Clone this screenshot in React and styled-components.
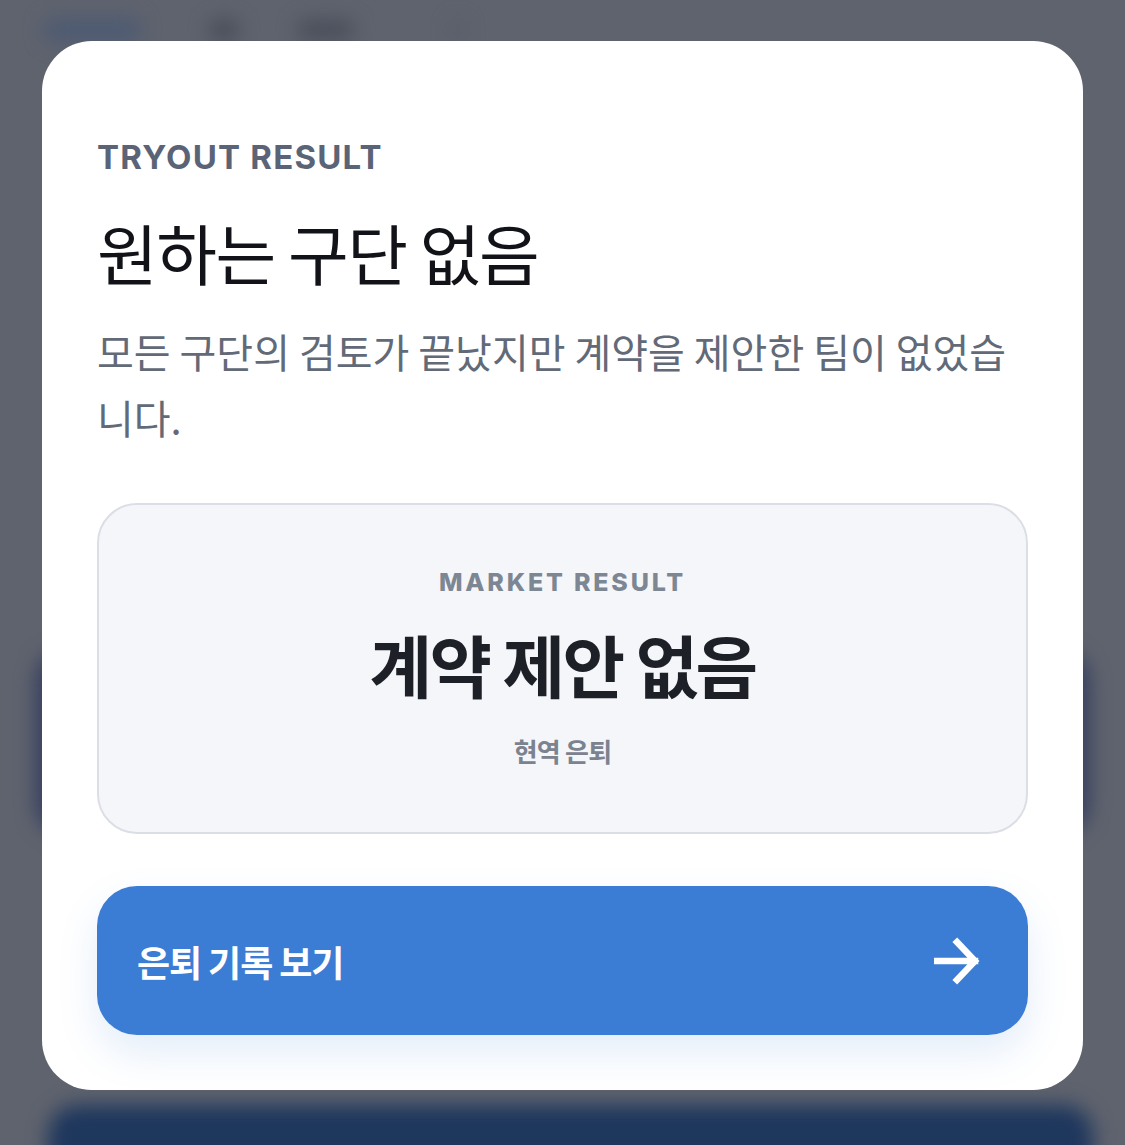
import React from "react";
import styled, { createGlobalStyle } from "styled-components";

const GlobalStyle = createGlobalStyle`
  html, body {
    margin: 0;
    padding: 0;
    background: #5f636e;
    font-family: Inter, "Noto Sans CJK KR", sans-serif;
  }
  * {
    box-sizing: border-box;
  }
`;

const Screen = styled.div`
  position: relative;
  width: 1125px;
  height: 1145px;
  overflow: hidden;
  background: #5f636e;
`;

/* blurred page behind the dialog */
const Backdrop = styled.div`
  display: flex;
  flex-direction: column;
  height: 100%;
  filter: blur(10px);
`;

const TopBar = styled.div`
  display: flex;
  align-items: center;
  gap: 60px;
  height: 60px;
  padding: 0 45px;
`;

const Pill = styled.div`
  width: 95px;
  height: 22px;
  border-radius: 8px;
  background: #4b5a73;
`;

const Blob = styled.div`
  width: ${(p) => p.$w}px;
  height: 18px;
  border-radius: 6px;
  background: ${(p) => p.$c};
  margin-left: ${(p) => p.$ml || 0}px;
`;

const Spacer = styled.div`
  flex: 1;
`;

const MidPanel = styled.div`
  height: 185px;
  margin: 590px 36px 0 36px;
  border-radius: 30px;
  background: #343d5e;
`;

const BottomBar = styled.div`
  height: 60px;
  margin: 0 32px -20px 48px;
  border-radius: 30px 30px 0 0;
  background: #1e375d;
`;

const Overlay = styled.div`
  position: absolute;
  inset: 0;
  display: flex;
  padding: 41px 42px 55px 42px;
`;

const Modal = styled.div`
  flex: 1;
  display: flex;
  flex-direction: column;
  background: #ffffff;
  border-radius: 50px;
  padding: 96px 55px 54px 55px;
`;

const Eyebrow = styled.div`
  font-family: Inter, sans-serif;
  font-size: 33px;
  font-weight: 700;
  letter-spacing: 1.2px;
  line-height: 40px;
  color: #5a6476;
`;

const Title = styled.h1`
  margin: 34px 0 0 0;
  font-family: "Noto Sans CJK KR", sans-serif;
  font-size: 66px;
  font-weight: 400;
  letter-spacing: -1.5px;
  line-height: 80px;
  color: #111318;
`;

const Description = styled.p`
  margin: 27px 0 0 0;
  font-family: "Noto Sans CJK KR", sans-serif;
  font-size: 40px;
  font-weight: 400;
  letter-spacing: 0;
  line-height: 66px;
  color: #626a78;
`;

const ResultCard = styled.div`
  display: flex;
  flex-direction: column;
  align-items: center;
  height: 331px;
  margin-top: 53px;
  padding-top: 62px;
  border: 2px solid #dcdee5;
  border-radius: 40px;
  background: #f5f6fa;
  text-align: center;
`;

const CardLabel = styled.div`
  font-family: Inter, sans-serif;
  font-size: 25px;
  font-weight: 800;
  letter-spacing: 2.8px;
  line-height: 30px;
  color: #7d8793;
`;

const CardValue = styled.div`
  margin-top: 27px;
  font-family: "Noto Sans CJK KR", sans-serif;
  font-size: 68px;
  font-weight: 700;
  letter-spacing: -2.5px;
  line-height: 80px;
  color: #1d2127;
`;

const CardNote = styled.div`
  margin-top: 30px;
  font-family: "Noto Sans CJK KR", sans-serif;
  font-size: 26px;
  font-weight: 700;
  letter-spacing: -0.8px;
  line-height: 34px;
  color: #7b838f;
`;

const ActionButton = styled.button`
  display: flex;
  align-items: center;
  justify-content: space-between;
  height: 149px;
  margin-top: 52px;
  padding: 0 46px 0 40px;
  border: none;
  border-radius: 40px;
  background: #3b7dd4;
  box-shadow: 0 18px 40px rgba(59, 125, 212, 0.14);
  color: #ffffff;
  font-family: "Noto Sans CJK KR", sans-serif;
  font-size: 36px;
  font-weight: 700;
  letter-spacing: -1.1px;
  cursor: pointer;
`;

const ArrowIcon = () => (
  <svg width="48" height="48" viewBox="0 0 48 48" fill="none">
    <path
      d="M3 24 H41 M23 5 L41 24 L23 43"
      stroke="#ffffff"
      strokeWidth="6.5"
      strokeLinecap="square"
      strokeLinejoin="miter"
    />
  </svg>
);

const App = () => {
  return (
    <Screen>
      <GlobalStyle />
      <Backdrop>
        <TopBar>
          <Pill />
          <Blob $w={28} $c="#454955" $ml={10} />
          <Blob $w={55} $c="#474b57" />
          <Blob $w={10} $c="#555966" $ml={40} />
        </TopBar>
        <MidPanel />
        <Spacer />
        <BottomBar />
      </Backdrop>
      <Overlay>
        <Modal>
          <Eyebrow>TRYOUT RESULT</Eyebrow>
          <Title>원하는 구단 없음</Title>
          <Description>
            모든 구단의 검토가 끝났지만 계약을 제안한 팀이 없었습니다.
          </Description>
          <ResultCard>
            <CardLabel>MARKET RESULT</CardLabel>
            <CardValue>계약 제안 없음</CardValue>
            <CardNote>현역 은퇴</CardNote>
          </ResultCard>
          <ActionButton>
            <span>은퇴 기록 보기</span>
            <ArrowIcon />
          </ActionButton>
        </Modal>
      </Overlay>
    </Screen>
  );
};

export default App;
